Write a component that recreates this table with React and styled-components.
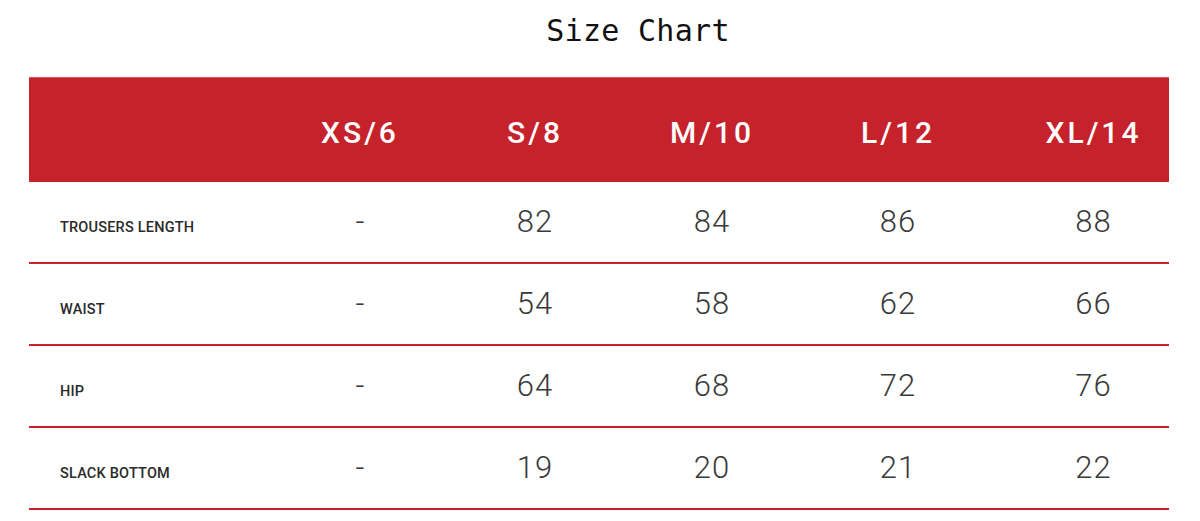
import React from 'react';
import styled, { createGlobalStyle } from 'styled-components';

const GlobalStyle = createGlobalStyle`
  html, body {
    margin: 0;
    padding: 0;
    background: #fff;
  }
  body {
    font-family: Roboto, "Liberation Sans", sans-serif;
  }
`;

const RED = '#c5222b';

const Page = styled.div`
  width: 1200px;
  height: 521px;
  overflow: hidden;
  background: #fff;
`;

const Title = styled.h1`
  margin: 0;
  height: 77px;
  padding: 11px 0 0 76px;
  box-sizing: border-box;
  text-align: center;
  font-family: "DejaVu Sans Mono", "Liberation Mono", monospace;
  font-weight: normal;
  font-size: 30px;
  letter-spacing: 0.3px;
  line-height: 40px;
  color: #111;
`;

const Table = styled.div`
  margin: 0 31px 0 29px;
`;

const columns = '243px 176px 174px 180px 192px 1fr';

const HeadRow = styled.div`
  display: grid;
  grid-template-columns: ${columns};
  align-items: center;
  height: 105px;
  background: ${RED};
  border-top: 1px solid #d9545b;
  box-sizing: border-box;
`;

const HeadCell = styled.div`
  text-align: center;
  color: #fff;
  font-family: Roboto, "Liberation Sans", sans-serif;
  font-weight: 500;
  font-size: 30px;
  letter-spacing: 3px;
  padding-top: 4px;
  &:last-child {
    padding-left: 24px;
  }
`;

const Row = styled.div`
  display: grid;
  grid-template-columns: ${columns};
  align-items: center;
  height: 82px;
  box-sizing: border-box;
  border-bottom: 2px solid #c8232c;
`;

const Label = styled.div`
  padding-left: 31px;
  padding-top: 11px;
  font-family: Roboto, "Liberation Sans", sans-serif;
  font-weight: 500;
  font-size: 14.5px;
  letter-spacing: 0.2px;
  color: #2a2a2a;
`;

const Value = styled.div`
  text-align: center;
  font-family: Roboto, "Liberation Sans", sans-serif;
  font-weight: 300;
  font-size: 31px;
  letter-spacing: ${p => (p.dash ? 0 : '1px')};
  color: #3a3a3a;
  padding-bottom: 2px;
  &:last-child {
    padding-left: 24px;
  }
`;

const sizes = ['XS/6', 'S/8', 'M/10', 'L/12', 'XL/14'];

const rows = [
  { name: 'TROUSERS LENGTH', values: ['-', '82', '84', '86', '88'] },
  { name: 'WAIST', values: ['-', '54', '58', '62', '66'] },
  { name: 'HIP', values: ['-', '64', '68', '72', '76'] },
  { name: 'SLACK BOTTOM', values: ['-', '19', '20', '21', '22'] },
];

export default function App() {
  return (
    <Page>
      <GlobalStyle />
      <Title>Size Chart</Title>
      <Table>
        <HeadRow>
          <div />
          {sizes.map(s => (
            <HeadCell key={s}>{s}</HeadCell>
          ))}
        </HeadRow>
        {rows.map(r => (
          <Row key={r.name}>
            <Label>{r.name}</Label>
            {r.values.map((v, i) => (
              <Value key={i} dash={v === '-'}>{v}</Value>
            ))}
          </Row>
        ))}
      </Table>
    </Page>
  );
}
